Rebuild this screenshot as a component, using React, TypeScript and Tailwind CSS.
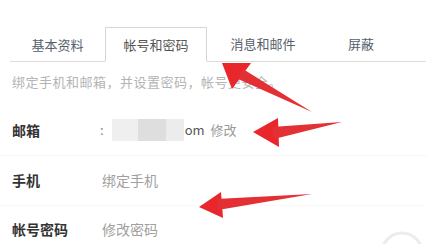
import React from "react";

export default function App() {
  const font = { fontFamily: '"Noto Sans CJK SC", "Noto Sans", sans-serif' };
  return (
    <div className="relative w-[426px] h-[244px] bg-white overflow-hidden" style={font}>
      <div className="pt-[27px] pl-[10px]">
        <div className="flex h-[35px] border-b border-[#dcdcdc] items-stretch">
          <div className="w-[95px] flex items-center justify-center text-[13px] text-[#55606c] -mb-px">基本资料</div>
          <div className="w-[102px] flex items-center justify-center text-[13px] text-[#555] bg-white border border-[#d6d6d6] border-b-white -mb-px">帐号和密码</div>
          <div className="w-[112px] flex items-center justify-center text-[13px] text-[#55606c]">消息和邮件</div>
          <div className="w-[84px] flex items-center justify-center text-[13px] text-[#55606c]">屏蔽</div>
        </div>
      </div>
      <div className="pl-[12px] pt-[11px] text-[13px] leading-[18px] tracking-[0.5px] text-[#b4b4b4]">
        绑定手机和邮箱，并设置密码，帐号更安全。
      </div>
      <div className="mt-[14px]">
        <div className="flex items-center h-[51px] pl-[12px] border-b border-[#f6f6f6]">
          <div className="w-[88px] text-[14px] font-bold text-[#333]">邮箱</div>
          <div className="flex items-center text-[13px] text-[#999]">
            <span className="text-[#888]">:</span>
            <span className="ml-[8px] flex h-[22px]">
              <span className="w-[26px] bg-[#efefef]" />
              <span className="w-[28px] bg-[#dedede]" />
              <span className="w-[18px] bg-[#ececec]" />
            </span>
            <span className="text-[#555] ml-[1px]">om</span>
            <span className="ml-[6px] text-[#999]">修改</span>
          </div>
        </div>
        <div className="flex items-center h-[50px] pl-[12px] border-b border-[#f8f8f8]">
          <div className="w-[90px] text-[14px] font-bold text-[#333]">手机</div>
          <div className="text-[14px] text-[#a0a0a0]">绑定手机</div>
        </div>
        <div className="flex items-center h-[46px] pl-[12px]">
          <div className="w-[90px] text-[14px] font-bold text-[#333]">帐号密码</div>
          <div className="text-[14px] text-[#a0a0a0]">修改密码</div>
        </div>
      </div>

      <svg className="absolute inset-0 pointer-events-none" width="426" height="244" viewBox="0 0 426 244">
        {/* arrow 1 */}
        <polygon points="222,63 251,63 232,89" fill="#e8262b" />
        <polygon points="243,69 238,79 312,112" fill="#e23035" />
        {/* arrow 2 */}
        <polygon points="253,132 278,118 279,147" fill="#e8262b" />
        <polygon points="272,127 274,139 342,122" fill="#e23035" />
        {/* arrow 3 */}
        <polygon points="199,207 221,192 223,218" fill="#e8262b" />
        <polygon points="216,199 218,210 312,194" fill="#e23035" />
        {/* watermark */}
        <circle cx="402" cy="253" r="20" fill="none" stroke="#ececec" strokeWidth="3" />
      </svg>
    </div>
  );
}
